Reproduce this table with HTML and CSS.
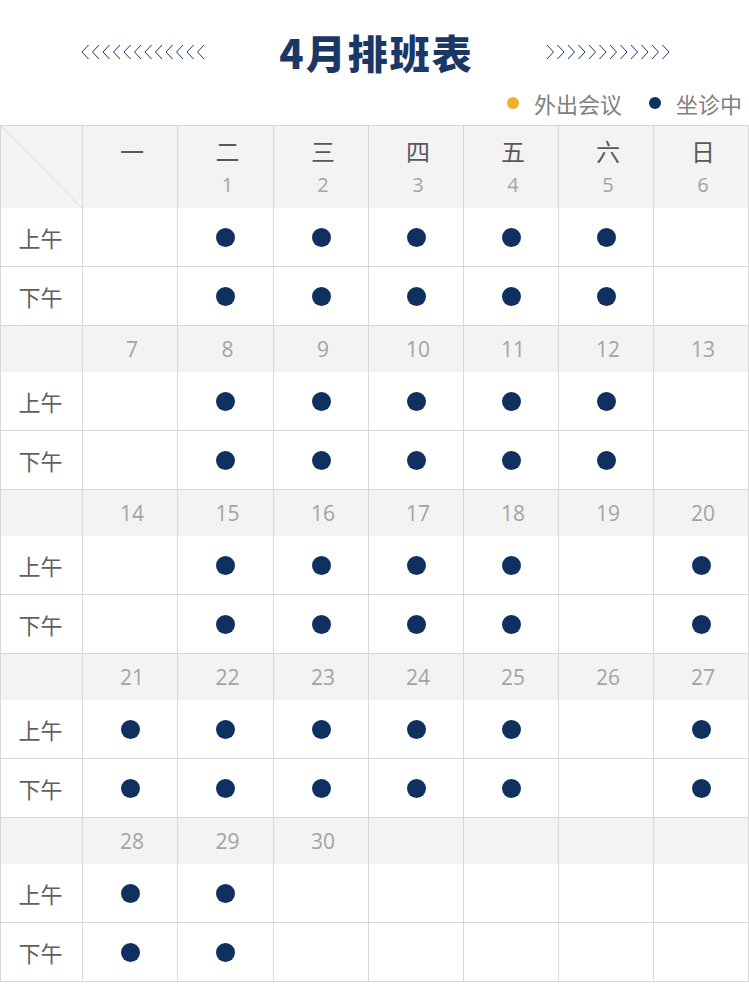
FILE: index.html
```html
<!DOCTYPE html>
<html lang="zh-CN">
<head>
<meta charset="utf-8">
<title>4月排班表</title>
<link rel="stylesheet" href="styles.css">
</head>
<body>
<div class="page">
  <div class="title-row">
    <svg class="chev" width="126" height="16" viewBox="0 0 126 16">
      <g fill="none" stroke="#1b3766" stroke-width="1">
        <polyline points="7.5,1 1,8 7.5,15"/><polyline points="18,1 11.5,8 18,15"/><polyline points="28.5,1 22,8 28.5,15"/><polyline points="39,1 32.5,8 39,15"/><polyline points="49.5,1 43,8 49.5,15"/><polyline points="60,1 53.5,8 60,15"/><polyline points="70.5,1 64,8 70.5,15"/><polyline points="81,1 74.5,8 81,15"/><polyline points="91.5,1 85,8 91.5,15"/><polyline points="102,1 95.5,8 102,15"/><polyline points="112.5,1 106,8 112.5,15"/><polyline points="123,1 116.5,8 123,15"/>
      </g>
    </svg>
    <h1 class="title">4月排班表</h1>
    <svg class="chev" width="126" height="16" viewBox="0 0 126 16">
      <g fill="none" stroke="#1b3766" stroke-width="1">
        <polyline points="3,1 9.5,8 3,15"/><polyline points="13.5,1 20,8 13.5,15"/><polyline points="24,1 30.5,8 24,15"/><polyline points="34.5,1 41,8 34.5,15"/><polyline points="45,1 51.5,8 45,15"/><polyline points="55.5,1 62,8 55.5,15"/><polyline points="66,1 72.5,8 66,15"/><polyline points="76.5,1 83,8 76.5,15"/><polyline points="87,1 93.5,8 87,15"/><polyline points="97.5,1 104,8 97.5,15"/><polyline points="108,1 114.5,8 108,15"/><polyline points="118.5,1 125,8 118.5,15"/>
      </g>
    </svg>
  </div>
  <div class="legend">
    <span class="legend-item"><i class="ldot orange"></i>外出会议</span>
    <span class="legend-item"><i class="ldot navy"></i>坐诊中</span>
  </div>

  <div class="grid">
    <!-- header -->
    <div class="hcell corner"></div>
    <div class="hcell"><span class="wd">一</span></div>
    <div class="hcell"><span class="wd">二</span><span class="num">1</span></div>
    <div class="hcell"><span class="wd">三</span><span class="num">2</span></div>
    <div class="hcell"><span class="wd">四</span><span class="num">3</span></div>
    <div class="hcell"><span class="wd">五</span><span class="num">4</span></div>
    <div class="hcell"><span class="wd">六</span><span class="num">5</span></div>
    <div class="hcell"><span class="wd">日</span><span class="num">6</span></div>

    <div class="cell label">上午</div>
    <div class="cell"></div>
    <div class="cell"><i class="dot"></i></div>
    <div class="cell"><i class="dot"></i></div>
    <div class="cell"><i class="dot"></i></div>
    <div class="cell"><i class="dot"></i></div>
    <div class="cell"><i class="dot"></i></div>
    <div class="cell"></div>

    <div class="cell label">下午</div>
    <div class="cell"></div>
    <div class="cell"><i class="dot"></i></div>
    <div class="cell"><i class="dot"></i></div>
    <div class="cell"><i class="dot"></i></div>
    <div class="cell"><i class="dot"></i></div>
    <div class="cell"><i class="dot"></i></div>
    <div class="cell"></div>

    <!-- week 2 -->
    <div class="wcell"></div>
    <div class="wcell">7</div>
    <div class="wcell">8</div>
    <div class="wcell">9</div>
    <div class="wcell">10</div>
    <div class="wcell">11</div>
    <div class="wcell">12</div>
    <div class="wcell">13</div>

    <div class="cell label">上午</div>
    <div class="cell"></div>
    <div class="cell"><i class="dot"></i></div>
    <div class="cell"><i class="dot"></i></div>
    <div class="cell"><i class="dot"></i></div>
    <div class="cell"><i class="dot"></i></div>
    <div class="cell"><i class="dot"></i></div>
    <div class="cell"></div>

    <div class="cell label">下午</div>
    <div class="cell"></div>
    <div class="cell"><i class="dot"></i></div>
    <div class="cell"><i class="dot"></i></div>
    <div class="cell"><i class="dot"></i></div>
    <div class="cell"><i class="dot"></i></div>
    <div class="cell"><i class="dot"></i></div>
    <div class="cell"></div>

    <!-- week 3 -->
    <div class="wcell"></div>
    <div class="wcell">14</div>
    <div class="wcell">15</div>
    <div class="wcell">16</div>
    <div class="wcell">17</div>
    <div class="wcell">18</div>
    <div class="wcell">19</div>
    <div class="wcell">20</div>

    <div class="cell label">上午</div>
    <div class="cell"></div>
    <div class="cell"><i class="dot"></i></div>
    <div class="cell"><i class="dot"></i></div>
    <div class="cell"><i class="dot"></i></div>
    <div class="cell"><i class="dot"></i></div>
    <div class="cell"></div>
    <div class="cell"><i class="dot"></i></div>

    <div class="cell label">下午</div>
    <div class="cell"></div>
    <div class="cell"><i class="dot"></i></div>
    <div class="cell"><i class="dot"></i></div>
    <div class="cell"><i class="dot"></i></div>
    <div class="cell"><i class="dot"></i></div>
    <div class="cell"></div>
    <div class="cell"><i class="dot"></i></div>

    <!-- week 4 -->
    <div class="wcell"></div>
    <div class="wcell">21</div>
    <div class="wcell">22</div>
    <div class="wcell">23</div>
    <div class="wcell">24</div>
    <div class="wcell">25</div>
    <div class="wcell">26</div>
    <div class="wcell">27</div>

    <div class="cell label">上午</div>
    <div class="cell"><i class="dot"></i></div>
    <div class="cell"><i class="dot"></i></div>
    <div class="cell"><i class="dot"></i></div>
    <div class="cell"><i class="dot"></i></div>
    <div class="cell"><i class="dot"></i></div>
    <div class="cell"></div>
    <div class="cell"><i class="dot"></i></div>

    <div class="cell label">下午</div>
    <div class="cell"><i class="dot"></i></div>
    <div class="cell"><i class="dot"></i></div>
    <div class="cell"><i class="dot"></i></div>
    <div class="cell"><i class="dot"></i></div>
    <div class="cell"><i class="dot"></i></div>
    <div class="cell"></div>
    <div class="cell"><i class="dot"></i></div>

    <!-- week 5 -->
    <div class="wcell"></div>
    <div class="wcell">28</div>
    <div class="wcell">29</div>
    <div class="wcell">30</div>
    <div class="wcell"></div>
    <div class="wcell"></div>
    <div class="wcell"></div>
    <div class="wcell"></div>

    <div class="cell label">上午</div>
    <div class="cell"><i class="dot"></i></div>
    <div class="cell"><i class="dot"></i></div>
    <div class="cell"></div>
    <div class="cell"></div>
    <div class="cell"></div>
    <div class="cell"></div>
    <div class="cell"></div>

    <div class="cell label">下午</div>
    <div class="cell"><i class="dot"></i></div>
    <div class="cell"><i class="dot"></i></div>
    <div class="cell"></div>
    <div class="cell"></div>
    <div class="cell"></div>
    <div class="cell"></div>
    <div class="cell"></div>
  </div>
</div>
</body>
</html>
```

FILE: styles.css
```css
html, body {
  margin: 0;
  padding: 0;
  background: #ffffff;
}

body {
  font-family: "Noto Sans CJK SC", "Noto Sans", sans-serif;
  color: #666;
}

.page {
  width: 749px;
}

.title-row {
  display: flex;
  align-items: center;
  justify-content: center;
  gap: 72px;
  height: 50px;
  margin-top: 27px;
  padding-left: 2px;
}

.chev {
  display: block;
}

.title {
  margin: 0;
  font-size: 40px;
  line-height: 50px;
  font-weight: 900;
  color: #1b3766;
  letter-spacing: 2px;
  margin-right: -2px;
}

.legend {
  display: flex;
  justify-content: flex-end;
  align-items: center;
  gap: 27px;
  height: 26px;
  margin-top: 13px;
  padding-right: 7px;
}

.legend-item {
  display: flex;
  align-items: center;
  gap: 15px;
  font-size: 22px;
  line-height: 26px;
  color: #808080;
}

.ldot {
  display: block;
  width: 12px;
  height: 12px;
  border-radius: 50%;
}

.ldot.orange { background: #f0b02b; }
.ldot.navy { background: #10305f; }

.grid {
  display: grid;
  grid-template-columns: 82px 95px 96px 95px 95px 95px 95px 95px;
  border-left: 1px solid #d8d8d8;
  border-top: 1px solid #d8d8d8;
  margin-top: 9px;
}

.hcell {
  height: 82px;
  background: #f3f3f3;
  border-right: 1px solid #d8d8d8;
  display: flex;
  flex-direction: column;
  align-items: center;
  padding-top: 11px;
  padding-left: 4px;
  box-sizing: border-box;
}

.corner {
  background: linear-gradient(to top right, #f3f3f3 calc(50% - 0.7px), #dddddd 50%, #f3f3f3 calc(50% + 0.7px));
}

.wd {
  font-size: 24px;
  line-height: 28px;
  color: #595959;
}

.num {
  margin-top: 8px;
  font-family: "Open Sans", "Noto Sans", sans-serif;
  font-size: 20px;
  line-height: 24px;
  color: #a3a3a3;
}

.wcell {
  height: 46px;
  box-sizing: border-box;
  background: #f3f3f3;
  border-right: 1px solid #d8d8d8;
  display: flex;
  align-items: center;
  justify-content: center;
  padding-left: 4px;
  padding-bottom: 1px;
  font-family: "Open Sans", "Noto Sans", sans-serif;
  font-size: 21px;
  color: #a3a3a3;
}

.cell {
  height: 59px;
  box-sizing: border-box;
  border-right: 1px solid #d8d8d8;
  border-bottom: 1px solid #d8d8d8;
  display: flex;
  align-items: center;
  justify-content: center;
}

.label {
  font-size: 22px;
  color: #606060;
  padding-right: 2px;
}

.dot {
  display: block;
  width: 19px;
  height: 19px;
  border-radius: 50%;
  background: #10305f;
}
```
